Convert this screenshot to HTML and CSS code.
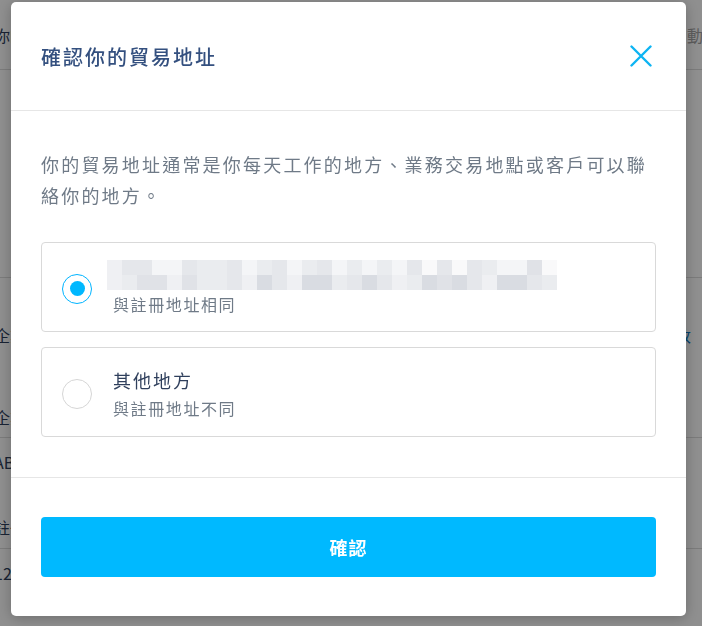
FILE: index.html
```html
<!DOCTYPE html>
<html lang="zh-Hant">
<head>
<meta charset="UTF-8" />
<meta name="viewport" content="width=device-width, initial-scale=1" />
<title>確認你的貿易地址</title>
<link rel="stylesheet" href="styles.css">
</head>
<body>

<div class="page">
  <div class="page-head">
    <span class="head-title">你的公司資料</span>
    <span class="head-action">動態</span>
  </div>
  <div class="page-section"></div>

  <div class="info">
    <div class="info-row">
      <span class="info-label">企業名稱</span>
      <span class="info-link">修改</span>
    </div>
    <div class="info-row gap-big">
      <span class="info-label">企業地址</span>
    </div>
  </div>

  <div class="info info-second">
    <div class="info-row">
      <span class="info-value">ABC Trading Limited</span>
    </div>
    <div class="info-row gap-mid">
      <span class="info-label">註冊編號</span>
    </div>
  </div>

  <div class="info info-third">
    <div class="info-row">
      <span class="info-value">12345678</span>
    </div>
  </div>
</div>

<div class="overlay">
  <div class="modal">
    <div class="modal-header">
      <h2 class="modal-title">確認你的貿易地址</h2>
      <button class="close-btn" aria-label="關閉">
        <svg width="22" height="22" viewBox="0 0 22 22">
          <path d="M1.5 1.5 L20.5 20.5 M20.5 1.5 L1.5 20.5" stroke="#0db4f3" stroke-width="2.4" stroke-linecap="round" fill="none"/>
        </svg>
      </button>
    </div>

    <div class="modal-body">
      <p class="intro">你的貿易地址通常是你每天工作的地方、業務交易地點或客戶可以聯絡你的地方。</p>

      <label class="option">
        <span class="radio checked"></span>
        <span class="option-text">
          <span class="mosaic" aria-hidden="true">
            <i class="m2"></i><i class="m4"></i><i class="m4"></i><i class="m1"></i><i class="m1"></i><i class="m4"></i><i class="m3"></i><i class="m3"></i><i class="m4"></i><i class="m1"></i>
            <i class="m3"></i><i class="m4"></i><i class="m1"></i><i class="m3"></i><i class="m4"></i><i class="m1"></i><i class="m3"></i><i class="m1"></i><i class="m3"></i><i class="m1"></i>
            <i class="m4"></i><i class="m0"></i><i class="m4"></i><i class="m0"></i><i class="m4"></i><i class="m3"></i><i class="m1"></i><i class="m1"></i><i class="m5"></i><i class="m0"></i>
            <i class="m2"></i><i class="m3"></i><i class="m5"></i><i class="m5"></i><i class="m2"></i><i class="m5"></i><i class="m3"></i><i class="m3"></i><i class="m4"></i><i class="m2"></i>
            <i class="m6"></i><i class="m4"></i><i class="m2"></i><i class="m6"></i><i class="m6"></i><i class="m3"></i><i class="m4"></i><i class="m6"></i><i class="m4"></i><i class="m2"></i>
            <i class="m3"></i><i class="m6"></i><i class="m5"></i><i class="m6"></i><i class="m4"></i><i class="m2"></i><i class="m6"></i><i class="m6"></i><i class="m4"></i><i class="m3"></i>
          </span>
          <span class="option-sub">與註冊地址相同</span>
        </span>
      </label>

      <label class="option">
        <span class="radio"></span>
        <span class="option-text">
          <span class="option-main">其他地方</span>
          <span class="option-sub">與註冊地址不同</span>
        </span>
      </label>
    </div>

    <div class="modal-footer">
      <button class="confirm-btn">確認</button>
    </div>
  </div>
</div>

</body>
</html>
```

FILE: styles.css
```css
html, body {
  overflow: hidden;
}

body {
  margin: 0;
  height: 626px;
  background: #fff;
  font-family: "Noto Sans CJK TC", "Noto Sans", sans-serif;
}

/* page behind the dialog */
.page {
  margin: 0 -25px 0 -6px;
  font-size: 16px;
  color: #2d3e5c;
}

.page-head {
  height: 69px;
  display: flex;
  justify-content: space-between;
  align-items: center;
  border-bottom: 1px solid #dcdcdc;
  padding-right: 8px;
}

.head-action {
  color: #a3a3a3;
}

.page-section {
  height: 207px;
  border-bottom: 1px solid #dcdcdc;
}

.info {
  padding: 45px 0 8px;
  border-bottom: 1px solid #dcdcdc;
}

.info-second {
  padding: 12px 0 9px;
}

.info-third {
  padding: 12px 0 0;
  border-bottom: none;
}

.info-row {
  display: flex;
  justify-content: space-between;
  line-height: 24px;
}

.gap-big {
  margin-top: 58px;
}

.gap-mid {
  margin-top: 41px;
}

.info-link {
  color: #0b78c2;
  margin-right: 36px;
}

/* dialog */
.overlay {
  position: fixed;
  inset: 0;
  background: rgba(0, 0, 0, 0.44);
  padding: 2px 0 0 11px;
}

.modal {
  width: 675px;
  background: #fff;
  border-radius: 5px;
  box-shadow: 0 2px 14px rgba(0, 0, 0, 0.25);
}

.modal-header {
  height: 108px;
  display: flex;
  align-items: center;
  justify-content: space-between;
  padding: 0 34px 0 30px;
  border-bottom: 1px solid #e6e6e6;
}

.modal-title {
  margin: 0;
  font-size: 20px;
  font-weight: 500;
  letter-spacing: 2px;
  color: #34507f;
}

.close-btn {
  border: none;
  background: none;
  padding: 0;
  width: 22px;
  height: 22px;
  cursor: pointer;
  display: flex;
}

.modal-body {
  padding: 38px 30px 40px;
  border-bottom: 1px solid #e6e6e6;
}

.intro {
  margin: 0 0 31px;
  font-size: 18px;
  line-height: 31px;
  letter-spacing: 2.2px;
  color: #6f7a87;
}

.option {
  display: flex;
  align-items: center;
  gap: 21px;
  height: 85px;
  padding: 3px 20px 0;
  border: 1px solid #d9d9d9;
  border-radius: 4px;
  cursor: pointer;
}

.option + .option {
  margin-top: 15px;
}

.radio {
  flex: none;
  width: 28px;
  height: 28px;
  border: 1px solid #d6d6d6;
  border-radius: 50%;
  display: flex;
  align-items: center;
  justify-content: center;
}

.radio.checked {
  border-color: #00b4ff;
}

.radio.checked::after {
  content: "";
  width: 15px;
  height: 15px;
  border-radius: 50%;
  background: #00b8ff;
}

.option-text {
  display: flex;
  flex-direction: column;
}

.option-main {
  font-size: 18px;
  line-height: 28px;
  letter-spacing: 2px;
  color: #2f3f5c;
}

.option-sub {
  font-size: 16px;
  line-height: 28px;
  letter-spacing: 1.6px;
  color: #6f7a87;
}

.mosaic {
  display: grid;
  grid-template-columns: repeat(30, 15px);
  grid-auto-rows: 15px;
  margin: 0 0 0 -6px;
  filter: blur(0.6px);
}

.mosaic i { display: block; }
.m0 { background: #f9f9fa; }
.m1 { background: #f4f5f7; }
.m2 { background: #eff0f3; }
.m3 { background: #eaecef; }
.m4 { background: #e5e7eb; }
.m5 { background: #e0e2e7; }
.m6 { background: #d9dce2; }

.modal-footer {
  padding: 39px 30px;
}

.confirm-btn {
  display: block;
  width: 100%;
  height: 60px;
  border: none;
  border-radius: 4px;
  background: #00b9ff;
  color: #fff;
  font-family: inherit;
  font-size: 18px;
  font-weight: bold;
  letter-spacing: 1px;
  cursor: pointer;
}
```
